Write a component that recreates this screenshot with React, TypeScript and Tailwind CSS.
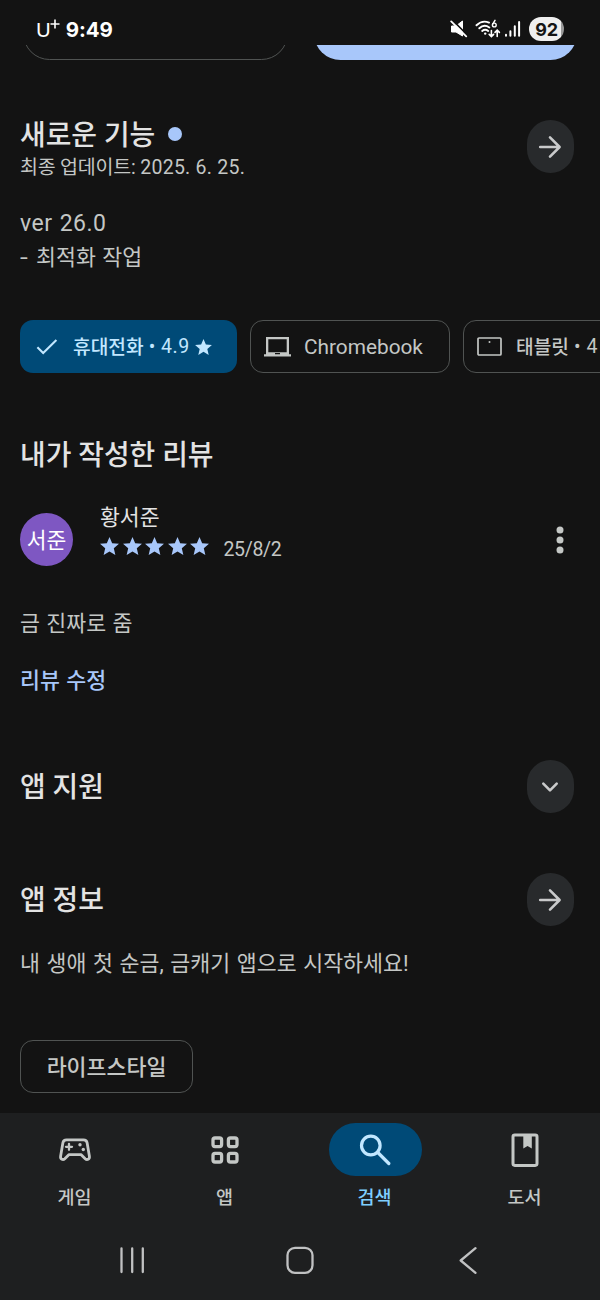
import { ReactNode } from "react";

const STAR_PATH =
  "M12 17.27 18.18 21l-1.64-7.03L22 9.24l-7.19-.61L12 2 9.19 8.63 2 9.24l5.46 4.73L5.82 21z";

const Star = ({ className }: { className: string }) => (
  <svg viewBox="2 2 20 19" className={className} fill="currentColor">
    <path d={STAR_PATH} />
  </svg>
);

const ArrowIcon = () => (
  <svg width="24" height="24" viewBox="0 0 24 24" className="mr-px" fill="none" stroke="currentColor" strokeWidth="2.6" strokeLinecap="round" strokeLinejoin="round">
    <path d="M2.2 12h19.2M12 2.4l9.6 9.6-9.6 9.6" />
  </svg>
);

const ChevronIcon = () => (
  <svg width="24" height="24" viewBox="0 0 24 24" className="mr-px" fill="none" stroke="currentColor" strokeWidth="2.6" strokeLinecap="round" strokeLinejoin="round">
    <path d="M5.3 8.6l6.7 6.7 6.7-6.7" />
  </svg>
);

const RoundButton = ({ children }: { children: ReactNode }) => (
  <button className="flex h-[53px] w-[47px] shrink-0 items-center justify-center rounded-full bg-[#282a2c] text-[#c9cacb]">
    {children}
  </button>
);

const StatusBar = () => (
  <div className="flex h-[45px] items-start justify-between pr-9 pl-9 text-white">
    <div className="flex pt-[14px] leading-[30px]">
      <span className="font-['Lato'] text-[20px]">U</span>
      <svg width="10" height="10" viewBox="0 0 10 10" className="-ml-px mt-[5px]" stroke="currentColor" strokeWidth="1.6">
        <path d="M.5 5h9M5 .5v9" />
      </svg>
      <span className="ml-[6px] pt-px font-['Inter'] text-[20.5px] font-bold tracking-[-0.1px]">9:49</span>
    </div>
    <div className="flex items-center pt-[17px]">
      <svg width="18" height="18" viewBox="0 0 18 18">
        <path d="M1.500 6h4.500l6.500-5v15l-6.500-4H1.500z" fill="#fff" stroke="#fff" strokeWidth="1" strokeLinejoin="round" />
        <path d="M2.400 .2 17.600 15.400" stroke="#131313" strokeWidth="1.800" />
        <path d="M1.2 1.4 16.2 16.4" stroke="#fff" strokeWidth="1.8" strokeLinecap="round" />
      </svg>
      <svg width="26" height="20" viewBox="0 0 26 20" className="ml-[7px]" fill="none" stroke="#fff" strokeWidth="1.9" strokeLinecap="round">
        <path d="M1.5 6.3C5.2 2.7 9.8 1.8 14 3.6M4.3 9.3c3-2.8 7-3 10-.8M7.2 12c1.9-1.5 4.2-1.4 6 0" />
        <circle cx="10.2" cy="14.6" r="1.2" fill="#fff" stroke="none" />
        <path d="M20 1.3l-2.3 3.8" strokeWidth="1.5" />
        <circle cx="19.3" cy="6" r="1.9" strokeWidth="1.4" />
        <path d="M16.4 11.5v6M14.2 15.4l2.2 2.2 2.2-2.2M22.2 17.5v-6M20 13.4l2.2-2.2 2.2 2.2" strokeWidth="1.6" />
      </svg>
      <svg width="17" height="18" viewBox="0 0 17 18" className="ml-[3px]" stroke="#fff" strokeWidth="2" strokeLinecap="round">
        <path d="M2 14.8v1M6.4 11.3v4.5M10.8 6.3v9.5M15.1 2v13.8" />
      </svg>
      <div className="ml-[8px] flex h-[24px] w-[35px] items-center justify-center rounded-full bg-linear-to-r from-[#efefef] from-92% to-[#999] to-92% font-['Inter'] text-[18px] font-bold tracking-[-0.3px] text-[#151515]">
        92
      </div>
    </div>
  </div>
);

const Title = ({ children }: { children: ReactNode }) => (
  <h2 className="pt-[2px] text-[27.9px] leading-[34px] font-medium text-[#e3e3e3]">{children}</h2>
);

const DeviceChips = () => (
  <div className="mt-[46px] ml-5 flex gap-[13px] overflow-hidden text-[20px] leading-[30px]">
    <div className="flex h-[53px] w-[217px] shrink-0 items-center rounded-[13px] bg-[#004a77] pl-4 text-[#c2e7ff]">
      <svg width="22" height="18" viewBox="0 0 22 18" fill="none" stroke="currentColor" strokeWidth="2.1">
        <path d="M1.4 9.3l5.8 5.8L20.4 2" />
      </svg>
      <span className="ml-[15px] pt-[3px] text-[19.2px] font-medium">휴대전화</span>
      <span className="ml-[5px] text-[19.5px] tracking-[0.5px]">• 4.9</span>
      <Star className="ml-[5px] h-[16px] w-[17px]" />
    </div>
    <div className="flex h-[53px] w-[200px] shrink-0 items-center rounded-[13px] border border-[#505352] pl-[13px] text-[#c4c7c5]">
      <svg width="27" height="20" viewBox="0 0 27 20">
        <path fill="currentColor" fillRule="evenodd" d="M2 0h23v17.2h2V19.500H0V17.200h2zM4.300 2.300v13h18.400v-13zM11 16v1.200h5V16z" />
      </svg>
      <span className="ml-[13px] text-[20.800px]">Chromebook</span>
    </div>
    <div className="flex h-[53px] w-[200px] shrink-0 items-center rounded-[13px] border border-[#505352] pl-[13px] text-[#c4c7c5]">
      <svg width="25" height="19" viewBox="0 0 25 19" fill="none" stroke="currentColor" strokeWidth="1.7">
        <rect x="1" y="1" width="23" height="17" rx="1" />
        <circle cx="12.500" cy="5" r="1" fill="currentColor" stroke="none" />
      </svg>
      <span className="ml-[14px] pt-[3px] text-[19.2px] font-medium whitespace-nowrap">태블릿</span>
      <span className="ml-[5px] text-[19.5px] tracking-[0.5px] whitespace-nowrap">• 4</span>
    </div>
  </div>
);

const MyReview = () => (
  <section className="px-5 pt-[64px]">
    <Title>내가 작성한 리뷰</Title>
    <div className="mt-[27px] flex h-[70px]">
      <div className="mt-[13px] flex h-[53px] w-[53px] items-center justify-center rounded-full bg-[#7e57c2] pt-[3px] text-[21.5px] text-white">
        서준
      </div>
      <div className="ml-[27px] pt-[3px]">
        <div className="text-[21.600px] leading-[30px] text-[#e3e3e3]">황서준</div>
        <div className="flex items-start">
          <div className="flex gap-[3.600px] pt-[4px] text-[#a8c7fa]">
            {[1, 2, 3, 4, 5].map((n) => (
              <Star key={n} className="h-[18px] w-[19px]" />
            ))}
          </div>
          <span className="ml-[14px] pt-[3px] text-[19.5px] leading-[27px] tracking-[-0.3px] text-[#c4c7c5]">25/8/2</span>
        </div>
      </div>
      <svg width="8" height="28" viewBox="0 0 8 28" className="mt-[26px] mr-4 ml-auto" fill="#c4c7c5">
        <circle cx="4" cy="4" r="3.500" />
        <circle cx="4" cy="14" r="3.500" />
        <circle cx="4" cy="24" r="3.500" />
      </svg>
    </div>
    <p className="mt-[39px] text-[21.700px] leading-[30px] [word-spacing:1px] text-[#c4c7c5]">금 진짜로 줌</p>
    <p className="mt-[27px] text-[21.700px] leading-[30px] font-medium [word-spacing:1px] text-[#a8c7fa]">리뷰 수정</p>
  </section>
);

const NavItem = ({ label, active, children }: { label: string; active?: boolean; children: ReactNode }) => (
  <div className={"flex flex-1 flex-col items-center " + (active ? "text-[#c2e7ff]" : "text-[#c4c7c5]")}>
    <div className={"flex h-[53px] w-[93px] items-center justify-center rounded-full " + (active ? "bg-[#004a77]" : "")}>
      {children}
    </div>
    <span className={"mt-[8px] mr-px text-[18.500px] leading-[28px] font-medium " + (active ? "text-[#7fcfff]" : "")}>{label}</span>
  </div>
);

const BottomNav = () => (
  <nav className="mt-5 h-[187px] bg-[#1e1f20] pt-[10px]">
    <div className="flex">
      <NavItem label="게임">
        <svg width="36" height="28" viewBox="0 0 36 28" fill="none" stroke="currentColor" strokeWidth="2.800" strokeLinecap="round" strokeLinejoin="round">
          <path d="M9.500 3.800h17c2 0 3.300 1.200 3.600 3l2.300 13.500c.5 3-2.400 4.100-4.200 2.400l-4-4H11.800l-4 4c-1.800 1.700-4.700.6-4.200-2.400L5.900 6.800c.3-1.800 1.600-3 3.600-3z" />
          <path d="M12 7.800v6M9 10.800h6" strokeWidth="2.300" />
          <circle cx="23" cy="8.800" r="1.700" fill="currentColor" stroke="none" />
          <circle cx="26.300" cy="13.500" r="1.700" fill="currentColor" stroke="none" />
        </svg>
      </NavItem>
      <NavItem label="앱">
        <svg width="28" height="28" viewBox="0 0 28 28" fill="none" stroke="currentColor" strokeWidth="3.300">
          <rect x="2" y="2" width="8.600" height="8.600" rx="2" />
          <rect x="17.400" y="2" width="8.600" height="8.600" rx="2" />
          <rect x="2" y="17.400" width="8.600" height="8.600" rx="2" />
          <rect x="17.400" y="17.400" width="8.600" height="8.600" rx="2" />
        </svg>
      </NavItem>
      <NavItem label="검색" active>
        <svg width="32" height="32" viewBox="0 0 32 32" fill="none" stroke="currentColor" strokeWidth="3.200" strokeLinecap="round">
          <circle cx="11.800" cy="11.500" r="9.300" />
          <path d="M18.800 18.500l11 11" />
        </svg>
      </NavItem>
      <NavItem label="도서">
        <svg width="28" height="34" viewBox="0 0 28 34">
          <rect x="2" y="1.900" width="24" height="30.500" rx="1.800" fill="none" stroke="currentColor" strokeWidth="3" />
          <path d="M12.300 3h8.500v12.500l-4.250-2.400-4.250 2.400z" fill="currentColor" />
        </svg>
      </NavItem>
    </div>
    <div className="mt-[34px] flex items-center text-[#c0c1c2]">
      <svg width="28" height="28" viewBox="0 0 28 28" className="ml-[118px]" stroke="currentColor" strokeWidth="2.300" strokeLinecap="round">
        <path d="M3.500 2.500v23.500M14.200 2.500v23.500M24.800 2.500v23.500" />
      </svg>
      <svg width="28" height="28" viewBox="0 0 28 28" className="ml-[140px]" fill="none" stroke="currentColor" strokeWidth="2.300">
        <rect x="1.500" y="1.800" width="25" height="25" rx="7.500" />
      </svg>
      <svg width="20" height="28" viewBox="0 0 20 28" className="ml-[144px]" fill="none" stroke="currentColor" strokeWidth="2.300" strokeLinecap="round" strokeLinejoin="round">
        <path d="M17.500 2.200 2.700 14.500l14.800 12.300" />
      </svg>
    </div>
  </nav>
);

const App = () => {
  return (
    <div className="h-[1300px] w-[600px] overflow-hidden bg-[#131313] font-['Roboto','Noto_Sans_CJK_KR',sans-serif]">
      <StatusBar />
      {/* action buttons, scrolled under the status bar */}
      <div className="flex h-[15px] items-end gap-[26.600px] overflow-hidden px-[23px]">
        <div className="h-[53px] flex-1 shrink-0 rounded-full border border-[#505352]" />
        <div className="h-[53px] flex-1 shrink-0 rounded-full bg-[#a8c7fa]" />
      </div>

      <section className="px-5 pt-[57px]">
        <div className="flex justify-between pr-[6px]">
          <div>
            <div className="flex items-center">
              <Title>새로운 기능</Title>
              <span className="mb-[2px] ml-[13px] h-[14px] w-[14px] rounded-full bg-[#a8c7fa]" />
            </div>
            <p className="mt-px text-[19.500px] leading-[28px] text-[#c4c7c5]">
              <span className="tracking-[-0.2px]">최종 업데이트: </span>
              <span className="tracking-[0.25px]">2025. 6. 25.</span>
            </p>
          </div>
          <div className="pt-[3px]">
            <RoundButton>
              <ArrowIcon />
            </RoundButton>
          </div>
        </div>
        <p className="mt-[25px] text-[21.700px] leading-[33.500px] [word-spacing:1px] text-[#c4c7c5]">
          <span className="text-[23px] tracking-[0.5px]">ver 26.0</span>
          <br />
          <span className="inline-block w-4 origin-left scale-x-130">-</span>최적화 작업
        </p>
      </section>

      <DeviceChips />
      <MyReview />

      <section className="mt-[64px] flex h-[53px] items-center justify-between pr-[26px] pl-5">
        <Title>앱 지원</Title>
        <RoundButton>
          <ChevronIcon />
        </RoundButton>
      </section>

      <section className="mt-[60px]">
        <div className="flex h-[53px] items-center justify-between pr-[26px] pl-5">
          <Title>앱 정보</Title>
          <RoundButton>
            <ArrowIcon />
          </RoundButton>
        </div>
        <p className="mt-[23px] pl-5 text-[21.700px] leading-[30px] [word-spacing:1.200px] text-[#c4c7c5]">
          내 생애 첫 순금, 금캐기 앱으로 시작하세요!
        </p>
        <div className="mt-[61px] ml-5 flex h-[53px] w-[173px] items-center justify-center rounded-[13px] border border-[#505352] pt-[3px] text-[21.700px] font-medium text-[#c4c7c5]">
          라이프스타일
        </div>
      </section>

      <BottomNav />
    </div>
  );
};

export default App;
